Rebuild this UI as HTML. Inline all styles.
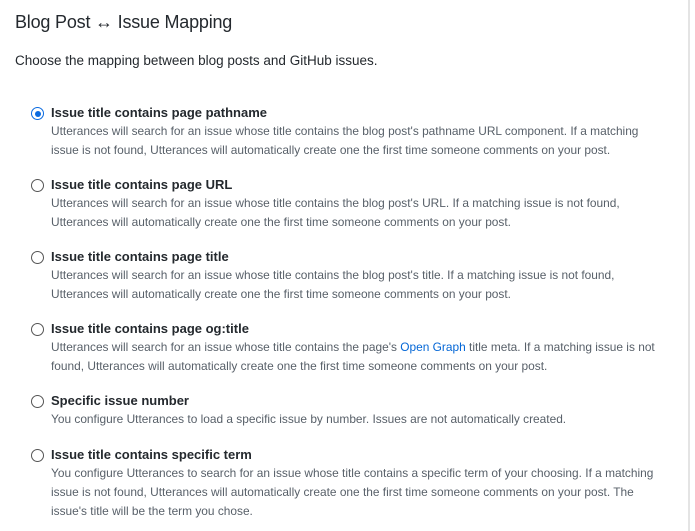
<!DOCTYPE html>
<html><head><style>
body{margin:0;width:695px;height:531px;background:#fff;font-family:"Liberation Sans",sans-serif;color:#24292e;position:relative;overflow:hidden}
.vl{position:absolute;left:688px;top:0;width:2px;height:531px;background:#e4e4e4}
h2{position:absolute;left:15px;top:12px;margin:0;font-size:18px;font-weight:normal;letter-spacing:-0.2px}
.p{position:absolute;left:15px;top:53px;font-size:13.5px;white-space:nowrap}
.o{position:absolute;left:31px;white-space:nowrap}
.r{position:absolute;left:0;top:3px;width:11px;height:11px;border:1px solid #555;border-radius:50%}
.r.on{border-color:#0a6ae0}
.r.on::after{content:"";position:absolute;left:2.5px;top:2.5px;width:6px;height:6px;border-radius:50%;background:#0a6ae0}
.t{position:absolute;left:20px;top:0;font-size:13px;font-weight:bold;line-height:18px}
.d{position:absolute;left:20px;top:18px;font-size:11.9px;line-height:19px;color:#586069}
a{color:#0366d6;text-decoration:none}
</style></head><body>
<div class="vl"></div>
<h2>Blog Post ↔ Issue Mapping</h2>
<div class="p">Choose the mapping between blog posts and GitHub issues.</div>

<div class="o" style="top:104px"><div class="r on"></div><div class="t">Issue title contains page pathname</div>
<div class="d">Utterances will search for an issue whose title contains the blog post's pathname URL component. If a matching<br>issue is not found, Utterances will automatically create one the first time someone comments on your post.</div></div>

<div class="o" style="top:176px"><div class="r"></div><div class="t">Issue title contains page URL</div>
<div class="d">Utterances will search for an issue whose title contains the blog post's URL. If a matching issue is not found,<br>Utterances will automatically create one the first time someone comments on your post.</div></div>

<div class="o" style="top:248px"><div class="r"></div><div class="t">Issue title contains page title</div>
<div class="d">Utterances will search for an issue whose title contains the blog post's title. If a matching issue is not found,<br>Utterances will automatically create one the first time someone comments on your post.</div></div>

<div class="o" style="top:320px"><div class="r"></div><div class="t">Issue title contains page og:title</div>
<div class="d">Utterances will search for an issue whose title contains the page's <a>Open Graph</a> title meta. If a matching issue is not<br>found, Utterances will automatically create one the first time someone comments on your post.</div></div>

<div class="o" style="top:392px"><div class="r"></div><div class="t">Specific issue number</div>
<div class="d">You configure Utterances to load a specific issue by number. Issues are not automatically created.</div></div>

<div class="o" style="top:446px"><div class="r"></div><div class="t">Issue title contains specific term</div>
<div class="d">You configure Utterances to search for an issue whose title contains a specific term of your choosing. If a matching<br>issue is not found, Utterances will automatically create one the first time someone comments on your post. The<br>issue's title will be the term you chose.</div></div>
</body></html>
